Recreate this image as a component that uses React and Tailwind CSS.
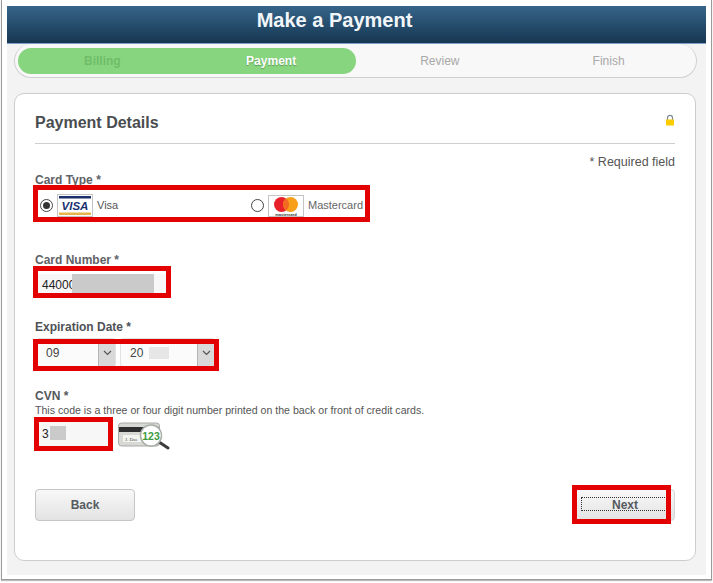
import React from "react";

const steps = [
  { name: "Billing", cls: "font-bold text-[#6fbd68]" },
  { name: "Payment", cls: "font-bold text-white [text-shadow:0_1px_1px_#5a9a54]" },
  { name: "Review", cls: "text-[#a8a8a8]" },
  { name: "Finish", cls: "text-[#a8a8a8]" },
];

const RedBox = ({ className }) => (
  <div className={"absolute border-[5px] border-[#e30000] pointer-events-none " + className} />
);

const Blur = ({ className }) => <span className={"absolute bg-[#cacaca] " + className} />;

const VisaLogo = () => (
  <svg width="36" height="23" viewBox="0 0 36 23" className="shrink-0">
    <rect x="0.5" y="0.5" width="35" height="22" fill="#fff" stroke="#c4c4c4" />
    <rect x="2" y="2" width="32" height="2.5" fill="#1b2f6b" />
    <rect x="2" y="18.5" width="32" height="2.5" fill="#e6b64a" />
    <text x="18" y="15.5" textAnchor="middle" fontFamily="Liberation Sans" fontWeight="700" fontStyle="italic" fontSize="11.5" fill="#1b3272">VISA</text>
  </svg>
);

const MastercardLogo = () => (
  <svg width="36" height="22" viewBox="0 0 36 22" className="shrink-0">
    <rect x="0.5" y="0.5" width="35" height="21" fill="#fff" stroke="#c4c4c4" />
    <circle cx="13.5" cy="9.5" r="7.5" fill="#e8202a" />
    <circle cx="22.5" cy="9.5" r="7.5" fill="#f79e1b" />
    <path d="M18 3.5a7.5 7.5 0 0 1 0 12a7.5 7.5 0 0 1 0-12z" fill="#f26a22" />
    <text x="18" y="20.5" textAnchor="middle" fontFamily="Liberation Sans" fontSize="4" fontWeight="700" fill="#333">mastercard</text>
  </svg>
);

const CvnImage = () => (
  <svg width="53" height="28" viewBox="0 0 53 28" className="shrink-0">
    <rect x="0.5" y="1" width="41" height="23" rx="3" fill="#d8d8d4" stroke="#a9a9a5" />
    <rect x="1" y="5" width="40" height="5" fill="#2f2f2f" />
    <rect x="5" y="13" width="20" height="7" fill="#f4f4f0" />
    <text x="7" y="19" fontFamily="Liberation Serif" fontSize="5" fill="#444">J. Doe</text>
    <path d="M41 20l9 6" stroke="#3c3c3c" strokeWidth="3" strokeLinecap="round" />
    <circle cx="33" cy="13.5" r="10.5" fill="#fff" stroke="#a8b0a8" strokeWidth="1.5" />
    <text x="33" y="17.5" textAnchor="middle" fontFamily="Liberation Sans" fontWeight="700" fontSize="10.5" fill="#3d9a3d">123</text>
  </svg>
);

const SelectBox = ({ value, className, children }) => (
  <div className={"relative flex h-[29px] items-center rounded-[3px] border border-[#e2e2e2] bg-[#fbfbfb] pl-[9px] text-xs text-[#444] " + className}>
    {value}
    {children}
    <div className="absolute right-0 top-0 flex h-full w-[17px] items-center justify-center border-l border-[#b5b5b5] bg-[#d9d9d9]">
      <svg width="9" height="6" viewBox="0 0 9 6">
        <path d="M1 1l3.5 3.5L8 1" fill="none" stroke="#555" strokeWidth="1.2" />
      </svg>
    </div>
  </div>
);

export default function App() {
  return (
    <div className="relative h-[583px] w-[713px] overflow-hidden bg-white font-['Liberation_Sans',Arial,sans-serif]">
      {/* Window frame */}
      <div className="absolute left-[1px] top-0 h-[580px] w-[711px] border-x border-b border-[#9a9a9a] shadow-[0_1px_1px_#bbb]" />
      <div className="ml-[7px] mt-[6px] h-[569px] w-[699px] bg-[#f3f3f3]">
        {/* Header */}
        <div className="flex h-[38px] items-center justify-center border-b border-[#7d9fc4] bg-gradient-to-b from-[#366589] to-[#173753] pb-[9px] pr-[44px]">
          <h1 className="text-xl font-bold text-[#f2f6fa]">Make a Payment</h1>
        </div>

        {/* Steps */}
        <div className="mx-[7px] h-[34px] w-[683px] rounded-[17px] border border-t-0 border-[#cfcfcf] bg-[#f8f8f8] px-[3px] pt-[4px]">
          <div className="relative grid h-[26px] grid-cols-4">
            <div className="absolute left-0 top-0 h-full w-[338px] rounded-full bg-[#88d57f]" />
            {steps.map((s) => (
              <div key={s.name} className={"relative flex items-center justify-center text-xs " + s.cls}>
                {s.name}
              </div>
            ))}
          </div>
        </div>

        {/* Payment card */}
        <div className="mx-[7px] mt-[15px] h-[468px] w-[682px] rounded-[10px] border border-[#cdcdcd] bg-white px-5 pt-[19px]">
          <div className="flex h-[31px] justify-between border-b border-[#cfcfcf]">
            <h2 className="text-base font-bold leading-5 text-[#4a4d50]">Payment Details</h2>
            <svg width="10" height="12" viewBox="0 0 10 12" className="mt-[1px]">
              <path d="M2.5 6V3.8a2.5 2.5 0 0 1 5 0V6" fill="none" stroke="#7f8794" strokeWidth="1.2" />
              <rect x="1" y="5.5" width="8" height="6" fill="#fccb00" />
            </svg>
          </div>
          <p className="mt-[11px] text-right text-[12.5px] leading-[14px] text-[#555]">* Required field</p>

          <label className="mt-[4px] block text-xs font-bold leading-[14px] text-[#5f6266]">Card Type *</label>
          <div className="mt-[5px] flex h-[27px] items-center">
            <div className="flex w-[216px] items-center">
              <span className="ml-[5px] mr-[4px] flex size-[13px] items-center justify-center rounded-full border border-[#444] bg-white">
                <span className="size-[7px] rounded-full bg-[#333]" />
              </span>
              <VisaLogo />
              <span className="ml-[4px] text-[11px] text-[#555]">Visa</span>
            </div>
            <div className="flex items-center">
              <span className="mr-[4px] size-[13px] rounded-full border border-[#444] bg-white" />
              <MastercardLogo />
              <span className="ml-[4px] text-[11px] text-[#666]">Mastercard</span>
            </div>
          </div>

          <label className="mt-[34px] block text-xs font-bold leading-[14px] text-[#5f6266]">Card Number *</label>
          <div className="relative ml-[3px] mt-[7px] flex h-[22px] w-[128px] items-center bg-[#f7f7f7] pl-[4px] text-xs text-[#222]">
            44000
            <Blur className="left-[34px] top-0 h-full w-[82px]" />
          </div>

          <label className="mt-[24px] block text-xs font-bold leading-[14px] text-[#4e5155]">Expiration Date *</label>
          <div className="mt-[4px] flex gap-[4px] pl-[1px]">
            <SelectBox value="09" className="w-[80px]" />
            <SelectBox value="20" className="w-[95px]">
              <Blur className="left-[28px] top-[8px] h-[12px] w-[20px] !bg-[#e6e6e6]" />
            </SelectBox>
          </div>

          <label className="mt-[22px] block text-xs font-bold leading-[14px] text-[#55585c]">CVN *</label>
          <p className="mt-[1px] text-[10.6px] leading-[12px] text-[#555]">This code is a three or four digit number printed on the back or front of credit cards.</p>
          <div className="mt-[4px] flex items-start">
            <div className="relative ml-[3px] mt-[1px] flex h-[25px] w-[70px] items-center bg-[#f7f7f7] pl-[4px] text-xs text-[#222]">
              3
              <Blur className="left-[12px] top-[5px] h-[14px] w-[16px]" />
            </div>
            <div className="ml-[10px] mt-[2px]">
              <CvnImage />
            </div>
          </div>

          <div className="mt-[39px] flex justify-between">
            <button className="h-[32px] w-[100px] rounded-[4px] border border-[#c6c6c6] bg-gradient-to-b from-[#f8f8f8] to-[#e3e3e3] text-xs font-bold text-[#555a60]">Back</button>
            <button className="relative h-[32px] w-[100px] rounded-[4px] border border-[#d6d6d6] bg-gradient-to-b from-[#f8f8f8] to-[#e3e3e3] text-xs font-bold text-[#555a60]">
              Next
              <span className="absolute left-[5px] right-[5px] top-[7px] h-[14px] border border-dotted border-[#333]" />
            </button>
          </div>
        </div>
      </div>

      {/* Red annotation boxes */}
      <RedBox className="left-[33px] top-[185px] h-[37px] w-[337px]" />
      <RedBox className="left-[33px] top-[266px] h-[32px] w-[138px]" />
      <RedBox className="left-[33px] top-[339px] h-[32px] w-[186px]" />
      <RedBox className="left-[34px] top-[417px] h-[34px] w-[79px]" />
      <RedBox className="left-[572px] top-[485px] h-[39px] w-[99px]" />
    </div>
  );
}
